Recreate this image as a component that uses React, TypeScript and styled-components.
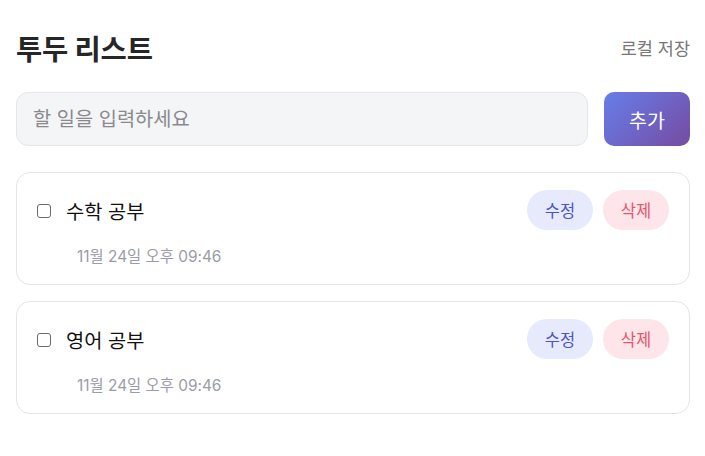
import React, { useState } from "react";
import styled, { createGlobalStyle } from "styled-components";

const Global = createGlobalStyle`
  html, body { margin: 0; padding: 0; background: #ffffff; }
  body { font-family: Inter, "Noto Sans CJK KR", sans-serif; color: #111; }
  * { box-sizing: border-box; }
`;

const Page = styled.div`
  padding: 24px 15px 16px 16px;
  display: flex;
  flex-direction: column;
`;

const Header = styled.header`
  display: flex;
  align-items: center;
  justify-content: space-between;
  height: 46px;
`;

const Title = styled.h1`
  margin: 0;
  font-size: 28.5px;
  font-weight: 700;
  color: #262626;
  letter-spacing: -0.2px;
`;

const Storage = styled.span`
  font-size: 17.5px;
  color: #777;
`;

const InputRow = styled.div`
  display: flex;
  gap: 16px;
  margin-top: 22px;
`;

const Input = styled.input`
  flex: 1;
  height: 54px;
  border: 1px solid #e4e6ea;
  border-radius: 12px;
  background: #f4f5f7;
  padding: 0 16px;
  font-family: inherit;
  font-size: 19.8px;
  color: #333;
  outline: none;
  &::placeholder { color: #8a8a8e; }
`;

const AddButton = styled.button`
  width: 86px;
  height: 54px;
  border: none;
  border-radius: 10px;
  background: linear-gradient(135deg, #667eea 0%, #764ba2 100%);
  color: #fff;
  font-family: inherit;
  font-size: 19.5px;
  font-weight: 400;
`;

const List = styled.ul`
  list-style: none;
  margin: 26px 0 0;
  padding: 0;
  display: flex;
  flex-direction: column;
  gap: 16px;
`;

const Card = styled.li`
  border: 1px solid #e3e5e8;
  border-radius: 14px;
  padding: 17px 20px 17px 20px;
  display: flex;
  flex-direction: column;
  gap: 17px;
`;

const Row = styled.div`
  display: flex;
  align-items: center;
  height: 40px;
`;

const Check = styled.span`
  width: 14px;
  height: 14px;
  border: 1.5px solid #6b6b6b;
  border-radius: 3px;
  flex: none;
  margin-right: 15px;
  margin-top: 1px;
`;

const Text = styled.span`
  flex: 1;
  font-size: 19.8px;
  color: #111;
`;

const Pill = styled.button<{ $tone: "edit" | "del" }>`
  width: 66px;
  height: 40px;
  border: none;
  border-radius: 20px;
  font-family: inherit;
  font-size: 16.5px;
  background: ${(p) => (p.$tone === "edit" ? "#e7eafd" : "#fde5e9")};
  color: ${(p) => (p.$tone === "edit" ? "#4a55c2" : "#e5566d")};
  & + & { margin-left: 10px; }
`;

const DateText = styled.span`
  padding-left: 40px;
  font-size: 15.4px;
  color: #9a9ca6;
  line-height: 20px;
`;

const todos = [
  { id: 1, text: "수학 공부", date: "11월 24일 오후 09:46" },
  { id: 2, text: "영어 공부", date: "11월 24일 오후 09:46" },
];

export default function App() {
  const [value, setValue] = useState("");
  return (
    <>
      <Global />
      <Page>
        <Header>
          <Title>투두 리스트</Title>
          <Storage>로컬 저장</Storage>
        </Header>
        <InputRow>
          <Input
            placeholder="할 일을 입력하세요"
            value={value}
            onChange={(e) => setValue(e.target.value)}
          />
          <AddButton>추가</AddButton>
        </InputRow>
        <List>
          {todos.map((t) => (
            <Card key={t.id}>
              <Row>
                <Check />
                <Text>{t.text}</Text>
                <Pill $tone="edit">수정</Pill>
                <Pill $tone="del">삭제</Pill>
              </Row>
              <DateText>{t.date}</DateText>
            </Card>
          ))}
        </List>
      </Page>
    </>
  );
}
